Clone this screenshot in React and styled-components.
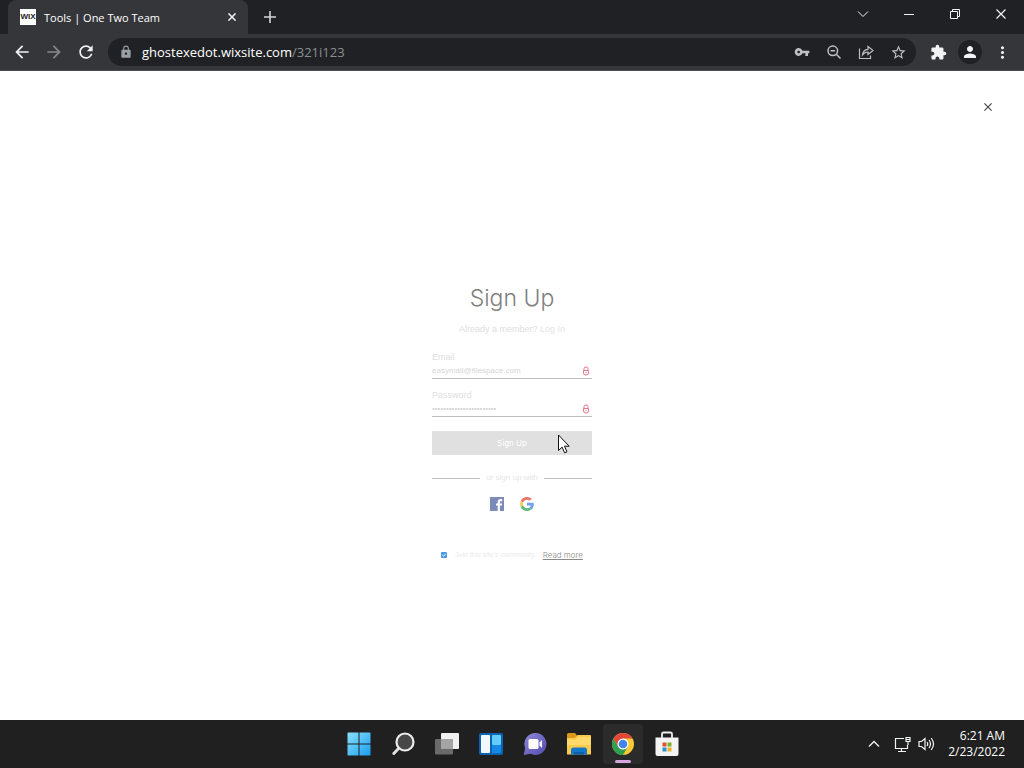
import React, { useState } from "react";
import styled, { createGlobalStyle } from "styled-components";
import {
  MdArrowBack,
  MdArrowForward,
  MdRefresh,
  MdLock,
  MdVpnKey,
  MdStarBorder,
  MdExtension,
  MdPerson,
  MdMoreVert,
} from "react-icons/md";

// ----------------------------------------

const GlobalStyle = createGlobalStyle`
  * {
    box-sizing: border-box;
  }

  body {
    margin: 0;
    font-family: "Open Sans", "Noto Sans", sans-serif;
    font-size: 12px;
  }

  button {
    border: 0;
    padding: 0;
    background: none;
    font: inherit;
    color: inherit;
  }
`;

const Desktop = styled.div`
  display: flex;
  flex-direction: column;
  min-height: 100vh;
  background: #fff;
`;

// ---------------- browser ----------------

const TabStrip = styled.div`
  display: flex;
  height: 34px;
  padding-left: 8px;
  background: #202124;
  color: #fff;
`;

const Tab = styled.div`
  display: flex;
  align-items: center;
  gap: 8px;
  width: 240px;
  padding: 0 8px 0 12px;
  border-radius: 8px 8px 0 0;
  background: #35363a;
`;

const Favicon = styled.span`
  width: 16px;
  height: 16px;
  background: #fff;
  color: #222;
  font: bold 8px/16px "Liberation Sans", sans-serif;
  text-align: center;
`;

const TabTitle = styled.span`
  flex: 1;
  font-size: 11px;
  white-space: nowrap;
`;

const IconButton = styled.button`
  display: flex;
  flex: none;
  align-items: center;
  justify-content: center;
  width: ${(props) => props.$w || 28}px;
  height: ${(props) => props.$h || 28}px;
  color: ${(props) => props.$color || "#f1f3f4"};
`;

const NewTab = styled(IconButton)`
  align-self: center;
  margin-left: 8px;
`;

const ProfileButton = styled(IconButton)`
  width: 24px;
  height: 24px;
  margin: 0 2px;
  border-radius: 50%;
  background: #202124;
`;

const WindowButtons = styled.div`
  display: flex;
  margin-left: auto;
`;

const Toolbar = styled.div`
  display: flex;
  align-items: center;
  height: 37px;
  padding: 0 8px;
  gap: 4px;
  border-bottom: 1px solid #4b4c50;
  background: #35363a;
`;

const AddressBar = styled.div`
  display: flex;
  flex: 1;
  align-items: center;
  gap: 4px;
  height: 28px;
  margin: 0 4px;
  padding: 0 4px 0 11px;
  border-radius: 14px;
  background: #202124;
  color: #9aa0a6;
  font-size: 13px;
`;

const Url = styled.span`
  flex: 1;
  padding-left: 5px;
  color: #8a8e93;
  white-space: nowrap;

  b {
    font-weight: 400;
    color: #fff;
  }
`;

// ---------------- page ----------------

const Page = styled.div`
  display: flex;
  flex: 1;
  flex-direction: column;
  color: #dedede;
  font-family: "Liberation Sans", Arial, sans-serif;
  font-size: 9px;
  line-height: 12px;
`;

const PageHeader = styled.header`
  display: flex;
  justify-content: flex-end;
  padding: 28px 28px 10px;
`;

const Main = styled.main`
  display: flex;
  flex: 1;
  align-items: center;
  justify-content: center;
`;

const Form = styled.form`
  display: flex;
  flex-direction: column;
  width: 160px;
`;

const Title = styled.h1`
  margin: 0;
  color: #808080;
  font-family: Inter, "Liberation Sans", sans-serif;
  font-size: 23px;
  font-weight: 300;
  line-height: 28px;
  text-align: center;
`;

const Subtitle = styled.p`
  margin: 11px 0 16px;
  text-align: center;

  a {
    color: #e4e4e4;
    text-decoration: none;
  }
`;

const Field = styled.div`
  display: flex;
  flex-direction: column;
  margin-bottom: ${(props) => props.$mb}px;
`;

const InputLine = styled.div`
  display: flex;
  align-items: center;
  height: 16px;
  padding-right: 2px;
  border-bottom: 1px solid #bdbdbd;
`;

const TextInput = styled.input`
  flex: 1;
  min-width: 0;
  padding: 0;
  border: 0;
  outline: none;
  background: none;
  color: #d6d6d6;
  font: 8px/12px "Liberation Sans", Arial, sans-serif;
`;

const SubmitWrap = styled.div`
  position: relative;
  display: flex;
`;

const Submit = styled.button`
  flex: 1;
  height: 24px;
  background: #e0e0e0;
  color: #fff;
  font-family: Inter, "Liberation Sans", sans-serif;
  font-size: 8px;
`;

const Pointer = styled.svg`
  position: absolute;
  top: 3px;
  right: 22px;
`;

const Divider = styled.div`
  display: flex;
  align-items: center;
  gap: 6px;
  margin: 17px 0 13px;
  color: #e6e6e6;
  font-size: 8px;
  white-space: nowrap;

  &::before,
  &::after {
    content: "";
    flex: 1;
    height: 1px;
    background: #bdbdbd;
  }
`;

const Socials = styled.div`
  display: flex;
  justify-content: center;
  gap: 16px;
`;

const Consent = styled.div`
  display: flex;
  align-items: center;
  justify-content: center;
  margin-top: 38px;
  color: #ebebeb;
  font-size: 7px;
  white-space: nowrap;

  label {
    margin: 0 7px 0 8px;
  }

  a {
    color: #8a8a8a;
    font-family: Inter, "Liberation Sans", sans-serif;
    font-size: 8px;
    font-weight: 300;
  }
`;

const Checkbox = styled.input`
  appearance: none;
  width: 6px;
  height: 6px;
  margin: 0;
  border-radius: 1px;
  background: #4a9ae0
    url("data:image/svg+xml,%3Csvg xmlns='http://www.w3.org/2000/svg' viewBox='0 0 6 6'%3E%3Cpath d='M1.3 3l1.2 1.2L4.8 1.8' fill='none' stroke='white'/%3E%3C/svg%3E");
`;

// ---------------- taskbar ----------------

const Taskbar = styled.footer`
  display: grid;
  grid-template-columns: 1fr auto 1fr;
  align-items: center;
  height: 48px;
  padding-left: 2px;
  background: #202020;
  color: #fff;
`;

const Apps = styled.nav`
  display: flex;
  grid-column: 2;
  gap: 4px;
`;

const AppButton = styled.button`
  position: relative;
  display: flex;
  align-items: center;
  justify-content: center;
  width: 40px;
  height: 40px;
  border-radius: 4px;
  background: ${(props) => (props.$active ? "#2b2b2b" : "none")};

  &::after {
    content: "";
    display: ${(props) => (props.$active ? "block" : "none")};
    position: absolute;
    bottom: 1px;
    left: 12px;
    width: 16px;
    height: 3px;
    border-radius: 2px;
    background: #d8a5de;
  }
`;

const Tray = styled.div`
  display: flex;
  align-items: center;
  justify-content: flex-end;
  padding-right: 19px;
`;

const Clock = styled.time`
  width: 69px;
  line-height: 16px;
  text-align: right;
`;

// ----------------------------------------

const Cross = ({ size = 10, width = 1.2 }) => (
  <svg width={size} height={size} viewBox="0 0 10 10" stroke="currentColor" strokeWidth={width}>
    <path d="M.5.5l9 9M9.5.5l-9 9" />
  </svg>
);

const ZoomOutIcon = () => (
  <svg width="16" height="16" fill="none" stroke="currentColor" strokeWidth="1.500">
    <circle cx="6.800" cy="6.800" r="4.800" />
    <path d="M10.300 10.300l4.200 4.200M4.500 6.800h4.600" />
  </svg>
);

const ShareIcon = () => (
  <svg width="16" height="16" viewBox="0 0 16 16" fill="none" stroke="currentColor" strokeWidth="1.200">
    <path d="M1.500 4.500v10h11v-3M4.500 11c.3-3.500 2.300-5.500 5.500-5.700V2.500l5 4-5 4V8c-2.400 0-4 .8-5.500 3z" />
  </svg>
);

const FieldBadge = () => (
  <svg width="8" height="10" viewBox="0 0 8 10" fill="none" stroke="#e57389" strokeWidth="1">
    <path d="M2 4V2.500q0-1.500 2-1.500t2 1.500V4M1.500 4.500h5v2.500q0 2-2.500 2t-2.500-2zM3.500 6.500h1" />
  </svg>
);

const Facebook = () => (
  <svg width="14" height="14" viewBox="0 0 14 14">
    <path fill="#7d8bb8" d="M0 0h14v14H0z" />
    <path
      fill="#fff"
      d="M7.700 14V8.600H6V6.500h1.700V5c0-1.900 1.100-2.900 2.800-2.900.8 0 1.500.1 1.700.1v2H11c-.9 0-1.100.4-1.100 1.100v1.200h2.200l-.3 2.100H9.900V14z"
    />
  </svg>
);

const Google = () => (
  <svg width="14" height="14" viewBox="0 0 48 48">
    <path fill="#ec7269" d="M24 9.500c3.540 0 6.710 1.220 9.210 3.600l6.850-6.850C35.900 2.380 30.470 0 24 0 14.620 0 6.510 5.380 2.560 13.220l7.980 6.190C12.430 13.720 17.740 9.500 24 9.500z" />
    <path fill="#6f9ff2" d="M46.980 24.550c0-1.570-.15-3.090-.38-4.550H24v9.020h12.940c-.58 2.960-2.260 5.480-4.780 7.180l7.730 6c4.510-4.180 7.090-10.360 7.090-17.650z" />
    <path fill="#f7cd52" d="M10.530 28.590c-.48-1.450-.76-2.990-.76-4.590s.27-3.140.76-4.590l-7.980-6.190C.92 16.460 0 20.120 0 24s.92 7.540 2.560 10.780z" />
    <path fill="#60b87a" d="M24 48c6.480 0 11.930-2.130 15.890-5.810l-7.730-6c-2.150 1.450-4.920 2.300-8.160 2.300-6.260 0-11.570-4.220-13.470-9.910l-7.980 6.190C6.510 42.620 14.620 48 24 48z" />
  </svg>
);

const Start = () => (
  <svg width="24" height="24" viewBox="0 0 24 24">
    <defs>
      <linearGradient id="start" x1="0" y1="0" x2="1" y2="1">
        <stop stopColor="#8ae2fb" />
        <stop offset="1" stopColor="#1a9df0" />
      </linearGradient>
    </defs>
    <path
      fill="url(#start)"
      d="M1 .5h10.500v11H.5V1zM12.500.5H23l.5.5v10.500h-11zM.5 12.500h11v11H1l-.5-.5zM12.500 12.500h11V23l-.5.500H12.500z"
    />
  </svg>
);

const Search = () => (
  <svg width="24" height="24" viewBox="0 0 24 24">
    <path d="M8.500 15.500L2.800 21.500" stroke="#e0e0e0" strokeWidth="3" strokeLinecap="round" />
    <circle cx="14" cy="10" r="8.500" fill="#484848" stroke="#ececec" strokeWidth="2.200" />
  </svg>
);

const TaskView = () => (
  <svg width="26" height="24" viewBox="0 0 26 24">
    <rect x="7" y="1" width="18" height="16" rx="1" fill="#f1f1f1" />
    <rect x="1" y="7" width="18" height="15.500" rx="1" fill="#6a6a6a" />
    <path d="M7 7h11q1 0 1 1v9H7z" fill="#a4a4a4" />
  </svg>
);

const Widgets = () => (
  <svg width="24" height="24" viewBox="0 0 24 24">
    <rect y="1" width="24" height="22" rx="2" fill="#0d63b3" />
    <rect x="2" y="3" width="9" height="18" rx="1" fill="#f3f8fc" />
    <rect x="13" y="3" width="9" height="10" rx="1" fill="#62ccfa" />
    <rect x="13" y="13" width="9" height="8" rx="1" fill="#138be6" />
  </svg>
);

const Chat = () => (
  <svg width="24" height="24" viewBox="0 0 24 24">
    <defs>
      <linearGradient id="chat" x1="0" y1="0" x2="1" y2="1">
        <stop stopColor="#8f8cd8" />
        <stop offset="1" stopColor="#5249b0" />
      </linearGradient>
    </defs>
    <path fill="url(#chat)" d="M12.500 1a11 11 0 1 1-5 20.800L.8 23l1.300-7A11 11 0 0 1 12.500 1z" />
    <rect x="5.500" y="7" width="10" height="10" rx="1.500" fill="#fff" />
    <path d="M16.500 10.500L19 8v8l-2.500-2.500z" fill="#fff" />
  </svg>
);

const Explorer = () => (
  <svg width="26" height="24" viewBox="0 0 26 24">
    <path fill="#dc9a1d" d="M1 2.500Q1 1 2.500 1H9l2 2.500v4H1z" />
    <path fill="#f9cb4b" d="M1 6h8l2.500-3H24q1 0 1 1v18.500H1z" />
    <path fill="#ffda6b" d="M1 7.500h9L12.500 5H25v8H1z" />
    <path fill="#1477c9" d="M5 22.500V18q0-2.500 2.500-2.500h11Q21 15.500 21 18v4.500z" />
    <path fill="#0c5fa8" d="M8 20h10v2.500H8z" />
  </svg>
);

const Chrome = () => (
  <svg width="24" height="24" viewBox="0 0 24 24">
    <circle cx="12" cy="12" r="11" fill="#fbc934" />
    <path fill="#2f9f51" d="M2.470 6.500A11 11 0 0 0 12 23l4.760-8.250L12 12 7.240 14.750z" />
    <path fill="#e0483b" d="M2.470 6.500A11 11 0 0 1 21.530 6.500H12v5.500l-4.760 2.750z" />
    <circle cx="12" cy="12" r="5.500" fill="#fff" />
    <circle cx="12" cy="12" r="4.300" fill="#4285e8" />
  </svg>
);

const Store = () => (
  <svg width="24" height="26" viewBox="0 0 24 26">
    <path d="M7 7V3q0-1.500 1.500-1.500h7Q17 1.500 17 3v4" fill="none" stroke="#eee" strokeWidth="1.800" />
    <path fill="#f4f4f4" d="M.5 6.500h23V23q0 2-2 2h-19q-2 0-2-2z" />
    <path fill="#e2532c" d="M7.500 11.500h4v4h-4z" />
    <path fill="#7cb02c" d="M12.500 11.500h4v4h-4z" />
    <path fill="#2b8fd0" d="M7.500 16.500h4v4h-4z" />
    <path fill="#f1b220" d="M12.500 16.500h4v4h-4z" />
  </svg>
);

const apps = [
  { name: "Start", icon: <Start /> },
  { name: "Search", icon: <Search /> },
  { name: "Task View", icon: <TaskView /> },
  { name: "Widgets", icon: <Widgets /> },
  { name: "Chat", icon: <Chat /> },
  { name: "File Explorer", icon: <Explorer /> },
  { name: "Google Chrome", icon: <Chrome />, active: true },
  { name: "Microsoft Store", icon: <Store /> },
];

// ----------------------------------------

const Browser = () => (
  <>
    <TabStrip>
      <Tab>
        <Favicon>WIX</Favicon>
        <TabTitle>Tools | One Two Team</TabTitle>
        <IconButton $w={16} $h={16} aria-label="Close tab">
          <Cross size={8} width={1.9} />
        </IconButton>
      </Tab>
      <NewTab $color="#d4d5d7" aria-label="New tab">
        <svg width="12" height="12" stroke="currentColor" strokeWidth="1.600">
          <path d="M6 0v12M0 6h12" />
        </svg>
      </NewTab>
      <WindowButtons>
        <IconButton $w={46} aria-label="Search tabs">
          <svg width="12" height="8" fill="none" stroke="currentColor">
            <path d="M1 1.500l5 5 5-5" />
          </svg>
        </IconButton>
        <IconButton $w={46} aria-label="Minimize">
          <svg width="10" height="2">
            <path d="M0 1h10v1H0z" fill="currentColor" />
          </svg>
        </IconButton>
        <IconButton $w={46} aria-label="Restore">
          <svg width="10" height="10" fill="none" stroke="currentColor">
            <path d="M.5 2.500h7v7h-7zM2.500 2.500v-2h7v7h-2" />
          </svg>
        </IconButton>
        <IconButton $w={46} aria-label="Close">
          <Cross />
        </IconButton>
      </WindowButtons>
    </TabStrip>
    <Toolbar>
      <IconButton aria-label="Back"><MdArrowBack size={20} /></IconButton>
      <IconButton $color="#87888b" aria-label="Forward"><MdArrowForward size={20} /></IconButton>
      <IconButton aria-label="Reload"><MdRefresh size={20} /></IconButton>
      <AddressBar>
        <MdLock size={14} />
        <Url>
          <b>ghostexedot.wixsite.com</b>/321i123
        </Url>
        <IconButton $color="#bdc1c6" aria-label="Passwords"><MdVpnKey size={16} /></IconButton>
        <IconButton $color="#bdc1c6" aria-label="Zoom"><ZoomOutIcon /></IconButton>
        <IconButton $color="#bdc1c6" aria-label="Share"><ShareIcon /></IconButton>
        <IconButton $color="#bdc1c6" aria-label="Bookmark"><MdStarBorder size={17} /></IconButton>
      </AddressBar>
      <IconButton aria-label="Extensions"><MdExtension size={17} /></IconButton>
      <ProfileButton aria-label="Profile"><MdPerson size={18} /></ProfileButton>
      <IconButton aria-label="Menu"><MdMoreVert size={19} /></IconButton>
    </Toolbar>
  </>
);

const SignUp = () => {
  const [formState, setFormState] = useState({
    email: "easymail@filespace.com",
    password: "12345678901234567890123",
    community: true,
  });

  const { email, password, community } = formState;

  const handleInputChange = ({ target }) => {
    setFormState({
      ...formState,
      [target.name]: target.type === "checkbox" ? target.checked : target.value,
    });
  };

  return (
    <Form onSubmit={(e) => e.preventDefault()}>
      <Title>Sign Up</Title>
      <Subtitle>
        Already a member? <a href="#login">Log In</a>
      </Subtitle>
      <Field $mb={10}>
        <label htmlFor="email">Email</label>
        <InputLine>
          <TextInput type="email" id="email" name="email" value={email} onChange={handleInputChange} />
          <FieldBadge />
        </InputLine>
      </Field>
      <Field $mb={14}>
        <label htmlFor="password">Password</label>
        <InputLine>
          <TextInput type="password" id="password" name="password" value={password} onChange={handleInputChange} />
          <FieldBadge />
        </InputLine>
      </Field>
      <SubmitWrap>
        <Submit type="submit">Sign Up</Submit>
        <Pointer width="13" height="20" viewBox="0 0 13 20">
          <path
            d="M1.500 1v15.500l3.600-3.400 2.500 5.700 2.400-1-2.500-5.600h4.700z"
            fill="#fff"
            stroke="#111"
          />
        </Pointer>
      </SubmitWrap>
      <Divider>or sign up with</Divider>
      <Socials>
        <IconButton type="button" $w={14} $h={14} aria-label="Facebook"><Facebook /></IconButton>
        <IconButton type="button" $w={14} $h={14} aria-label="Google"><Google /></IconButton>
      </Socials>
      <Consent>
        <Checkbox type="checkbox" id="community" name="community" checked={community} onChange={handleInputChange} />
        <label htmlFor="community">Join this site’s community.</label>
        <a href="#more">Read more</a>
      </Consent>
    </Form>
  );
};

const App = () => (
  <Desktop>
    <GlobalStyle />
    <Browser />
    <Page>
      <PageHeader>
        <IconButton $w={16} $h={16} $color="#444" aria-label="Close dialog">
          <Cross size={8} width={1.4} />
        </IconButton>
      </PageHeader>
      <Main>
        <SignUp />
      </Main>
    </Page>
    <Taskbar>
      <Apps>
        {apps.map(({ name, icon, active }) => (
          <AppButton key={name} $active={active} aria-label={name}>
            {icon}
          </AppButton>
        ))}
      </Apps>
      <Tray>
        <IconButton aria-label="Hidden icons">
          <svg width="12" height="8" fill="none" stroke="currentColor" strokeWidth="1.300">
            <path d="M1 6.500l5-5 5 5" />
          </svg>
        </IconButton>
        <IconButton aria-label="Network">
          <svg width="17" height="17" fill="none" stroke="currentColor" strokeWidth="1.200">
            <path d="M10 2.500H1.500v10h12V9M4 15.500h8M7.500 12.500v3M12 1.500h4v4h-4zM14 5.500V9M12 3.500h4" />
          </svg>
        </IconButton>
        <IconButton $w={20} aria-label="Volume">
          <svg width="17" height="16" fill="none" stroke="currentColor" strokeWidth="1.200">
            <path d="M1 5.500h2.500L7 2.500v11l-3.500-3H1zM9 6q1.500 2 0 4M11 4q3 4 0 8M13.200 2q4.600 6 0 12" />
          </svg>
        </IconButton>
        <Clock>
          6:21 AM
          <br />
          2/23/2022
        </Clock>
      </Tray>
    </Taskbar>
  </Desktop>
);

export default App;
